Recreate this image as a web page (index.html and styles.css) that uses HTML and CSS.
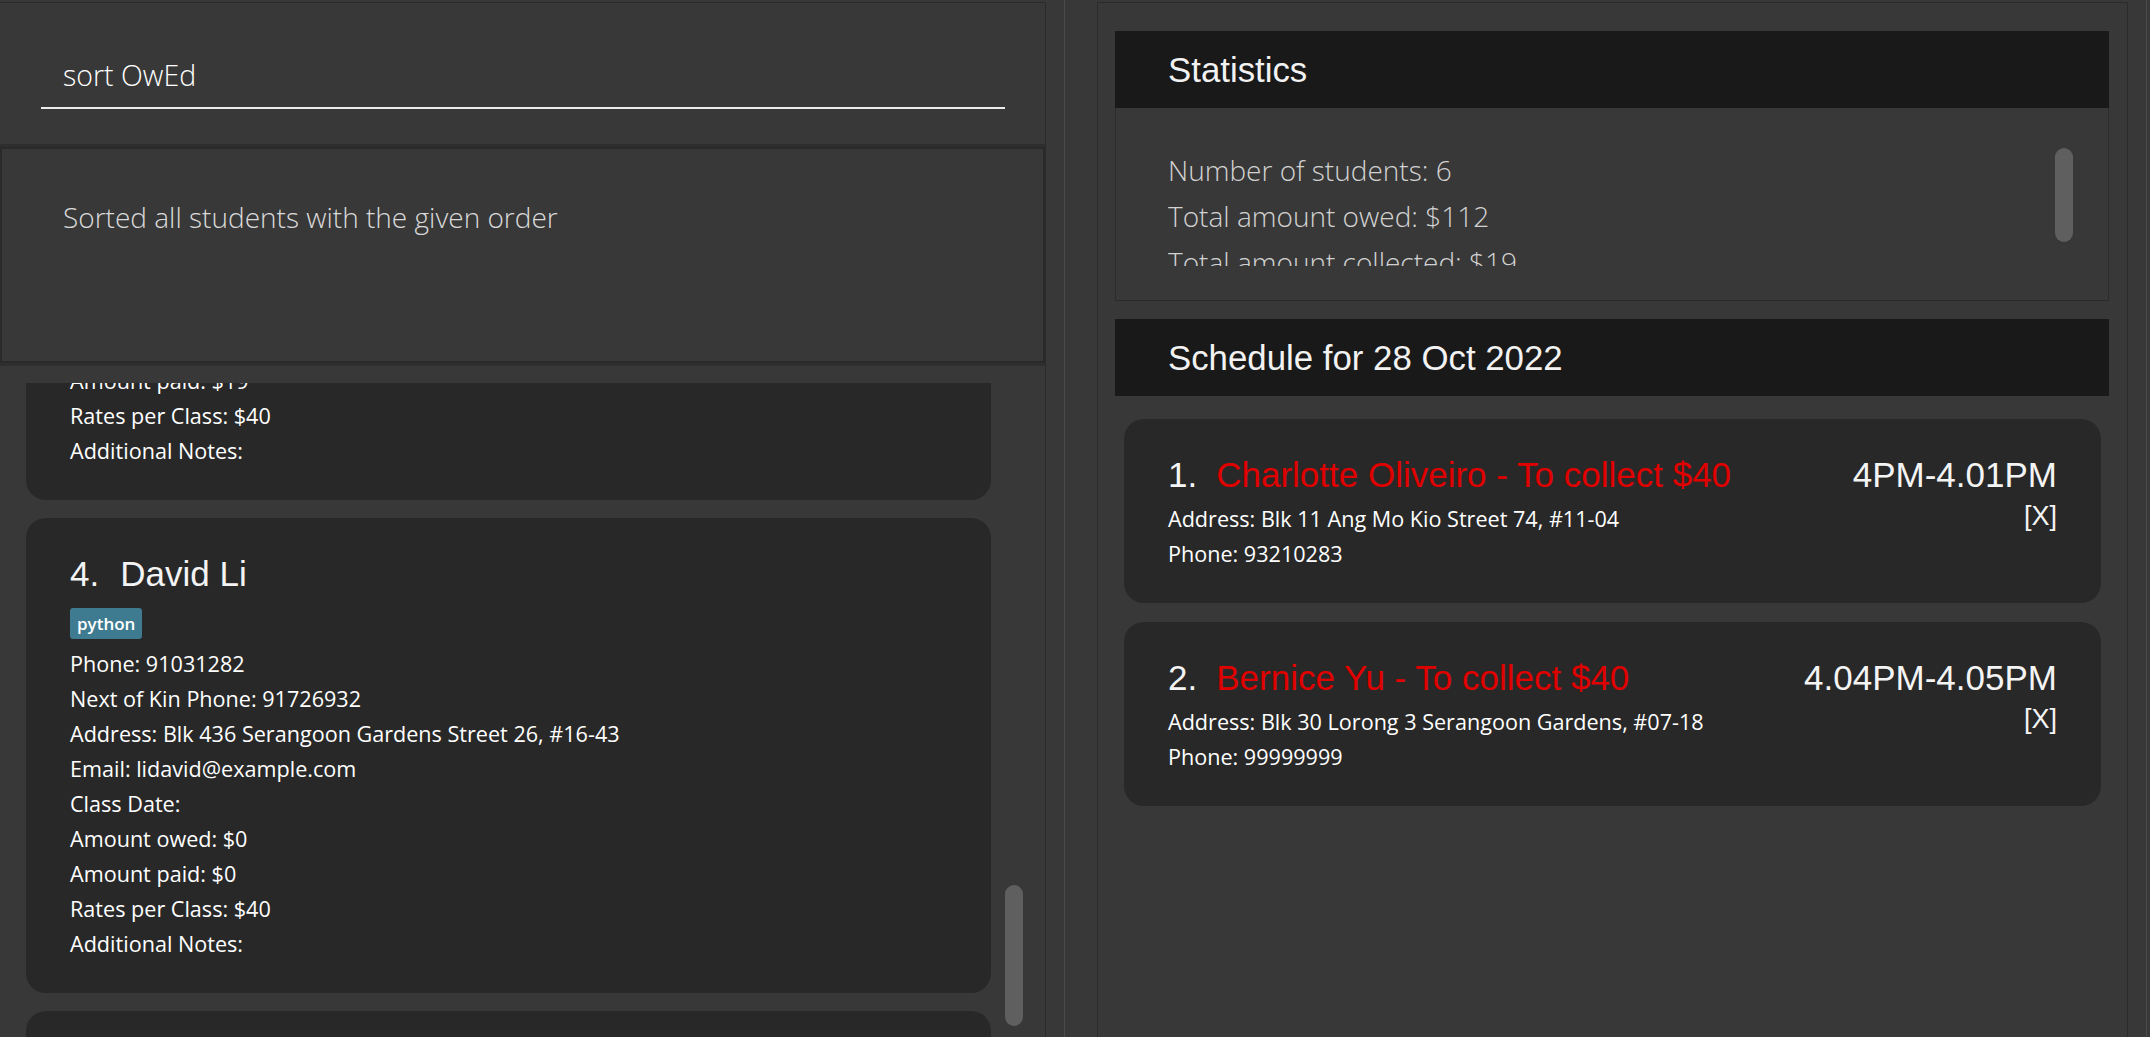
FILE: index.html
```html
<!DOCTYPE html>
<html lang="en">
<head>
<meta charset="utf-8">
<title>Tutor Assistant</title>
<link rel="stylesheet" href="styles.css">
</head>
<body>
<div class="app">
  <div class="left-pane">
    <div class="command-box">
      <div class="command-field">sort OwEd</div>
    </div>
    <div class="result-box">
      <p class="result-text">Sorted all students with the given order</p>
    </div>
    <div class="list-pane">
      <div class="list-viewport">
        <div class="card card-partial">
          <div class="detail">Amount paid: $19</div>
          <div class="detail">Rates per Class: $40</div>
          <div class="detail">Additional Notes:</div>
        </div>
        <div class="card">
          <div class="card-name"><span class="card-id">4.</span>David Li</div>
          <div class="tags"><span class="tag">python</span></div>
          <div class="details">
            <div class="detail">Phone: 91031282</div>
            <div class="detail">Next of Kin Phone: 91726932</div>
            <div class="detail">Address: Blk 436 Serangoon Gardens Street 26, #16-43</div>
            <div class="detail">Email: lidavid@example.com</div>
            <div class="detail">Class Date:</div>
            <div class="detail">Amount owed: $0</div>
            <div class="detail">Amount paid: $0</div>
            <div class="detail">Rates per Class: $40</div>
            <div class="detail">Additional Notes:</div>
          </div>
        </div>
        <div class="card card-next"></div>
      </div>
      <div class="list-scrollbar"><div class="thumb list-thumb"></div></div>
    </div>
  </div>

  <div class="divider"><div class="divider-line"></div></div>

  <div class="right-pane">
    <section class="stats">
      <div class="panel-header">Statistics</div>
      <div class="stats-body">
        <div class="stats-viewport">
          <div class="stat-line">Number of students: 6</div>
          <div class="stat-line">Total amount owed: $112</div>
          <div class="stat-line">Total amount collected: $19</div>
        </div>
        <div class="stats-scrollbar"><div class="thumb stats-thumb"></div></div>
      </div>
    </section>

    <section class="schedule">
      <div class="panel-header">Schedule for 28 Oct 2022</div>
      <div class="schedule-list">
        <div class="sched-card">
          <div class="sched-main">
            <div class="sched-title"><span class="sched-id">1.</span><span class="sched-name">Charlotte Oliveiro - To collect $40</span></div>
            <div class="sched-details">
              <div class="detail">Address: Blk 11 Ang Mo Kio Street 74, #11-04</div>
              <div class="detail">Phone: 93210283</div>
            </div>
          </div>
          <div class="sched-side">
            <div class="sched-time">4PM-4.01PM</div>
            <div class="sched-close">[X]</div>
          </div>
        </div>
        <div class="sched-card">
          <div class="sched-main">
            <div class="sched-title"><span class="sched-id">2.</span><span class="sched-name">Bernice Yu - To collect $40</span></div>
            <div class="sched-details">
              <div class="detail">Address: Blk 30 Lorong 3 Serangoon Gardens, #07-18</div>
              <div class="detail">Phone: 99999999</div>
            </div>
          </div>
          <div class="sched-side">
            <div class="sched-time">4.04PM-4.05PM</div>
            <div class="sched-close">[X]</div>
          </div>
        </div>
      </div>
    </section>
  </div>

  <div class="edge"><div class="edge-line"></div></div>
</div>
</body>
</html>
```

FILE: styles.css
```css
* {
  box-sizing: border-box;
}

html,
body {
  margin: 0;
  padding: 0;
}

body {
  width: 2150px;
  height: 1037px;
  overflow: hidden;
  background: #383838;
  color: #ffffff;
  font-family: "Open Sans", "Noto Sans", sans-serif;
}

.app {
  display: flex;
  height: 1037px;
  padding-top: 2px;
}

/* ---------- left pane ---------- */

.left-pane {
  width: 1046px;
  flex: none;
  display: flex;
  flex-direction: column;
  border-top: 1px solid #2b2b2b;
  border-right: 1px solid #2b2b2b;
  min-height: 0;
}

.command-box {
  height: 144px;
  flex: none;
  padding-top: 49px;
  border-bottom: 3px solid #2e2e2e;
}

.command-field {
  margin-left: 41px;
  width: 964px;
  padding: 0 0 8px 22px;
  border-bottom: 2px solid #ececec;
  font-weight: 300;
  font-size: 28.5px;
  line-height: 47px;
  color: #ffffff;
}

.result-box {
  height: 216px;
  flex: none;
  border: 2px solid #2a2a2a;
  padding: 48px 0 0 61px;
}

.result-text {
  margin: 0;
  font-weight: 300;
  font-size: 28px;
  line-height: 40px;
  color: #dadada;
}

.list-pane {
  flex: 1;
  min-height: 0;
  display: flex;
  border-top: 3px solid #2f2f2f;
  padding-top: 17px;
}

.list-viewport {
  flex: 1;
  min-height: 0;
  overflow: hidden;
  padding-left: 26px;
}

.list-scrollbar {
  width: 54px;
  flex: none;
  padding-left: 14px;
}

.thumb {
  width: 18px;
  border-radius: 9px;
  background: #5f5f5f;
}

.list-thumb {
  margin-top: 502px;
  height: 141px;
}

.card {
  background: #282828;
  border-radius: 20px;
  padding: 36px 44px 32px;
  margin-bottom: 18px;
}

.card-partial {
  margin-top: -20px;
  padding-top: 0;
  border-top-left-radius: 0;
  border-top-right-radius: 0;
}

.card-next {
  height: 200px;
}

.card-name {
  font-family: "Liberation Sans", Arial, sans-serif;
  font-size: 35px;
  line-height: 40px;
  color: #f4f4f4;
}

.card-id {
  margin-right: 21px;
}

.tags {
  margin-top: 14px;
  height: 31px;
  display: flex;
}

.tag {
  display: inline-block;
  height: 31px;
  padding: 0 7px;
  border-radius: 3px;
  background: #3e7b91;
  color: #ffffff;
  font-weight: 600;
  font-size: 17px;
  line-height: 31px;
}

.details {
  margin-top: 7px;
}

.detail {
  font-size: 21.6px;
  line-height: 35px;
  color: #ffffff;
  white-space: nowrap;
}

/* ---------- divider ---------- */

.divider {
  width: 51px;
  flex: none;
  margin-top: -2px;
  display: flex;
}

.divider-line {
  margin-left: 18px;
  width: 1px;
  background: #4b4b4b;
}

/* ---------- right pane ---------- */

.right-pane {
  width: 1031px;
  flex: none;
  border-top: 1px solid #2b2b2b;
  border-left: 1px solid #2b2b2b;
  border-right: 1px solid #2b2b2b;
  padding: 28px 18px 0 17px;
}

.panel-header {
  height: 77px;
  background: #191919;
  padding-left: 53px;
  font-family: "Liberation Sans", Arial, sans-serif;
  font-size: 34.8px;
  line-height: 77px;
  color: #f2f2f2;
}

.stats-body {
  height: 193px;
  display: flex;
  border: 1px solid #2b2b2b;
  border-top: none;
}

.stats-viewport {
  flex: 1;
  margin-top: 22px;
  height: 136px;
  overflow: hidden;
  padding: 17px 0 0 52px;
}

.stat-line {
  font-weight: 300;
  font-size: 28px;
  line-height: 46px;
  color: #d2d2d2;
}

.stats-scrollbar {
  width: 53px;
  flex: none;
  padding-top: 40px;
}

.stats-thumb {
  height: 94px;
}

.schedule {
  margin-top: 18px;
}

.schedule-list {
  padding: 23px 8px 0 9px;
}

.sched-card {
  display: flex;
  justify-content: space-between;
  background: #282828;
  border-radius: 20px;
  padding: 36px 44px 32px;
  margin-bottom: 19px;
}

.sched-title {
  font-family: "Liberation Sans", Arial, sans-serif;
  font-size: 35px;
  line-height: 40px;
  color: #f4f4f4;
  white-space: nowrap;
}

.sched-id {
  margin-right: 19px;
}

.sched-name {
  color: #e00000;
}

.sched-details {
  margin-top: 6px;
}

.sched-side {
  text-align: right;
  font-family: "Liberation Sans", Arial, sans-serif;
  color: #f4f4f4;
}

.sched-time {
  font-size: 35px;
  line-height: 40px;
}

.sched-close {
  margin-top: 4px;
  font-size: 27px;
  line-height: 35px;
}

/* ---------- window edge ---------- */

.edge {
  flex: 1;
  margin-top: -2px;
  display: flex;
}

.edge-line {
  margin-left: 18px;
  width: 1px;
  background: #4b4b4b;
}
```
